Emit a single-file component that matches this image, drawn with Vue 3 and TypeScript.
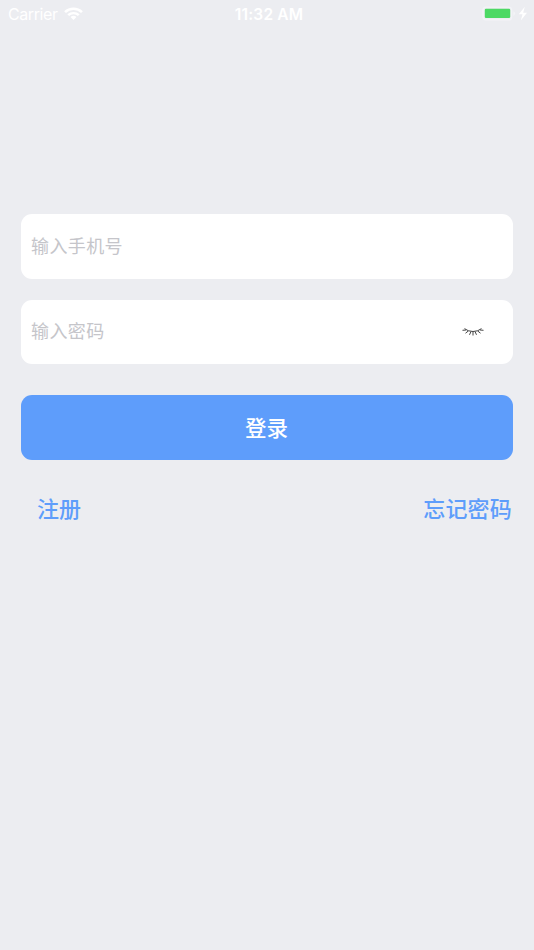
<script setup lang="ts">
import { ref } from 'vue'

const phone = ref('')
const password = ref('')
const visible = ref(false)
</script>

<template>
  <div class="screen">
    <header class="status">
      <div class="side">
        <span class="carrier">Carrier</span>
        <svg class="wifi" width="19" height="13" viewBox="0 0 18 13" preserveAspectRatio="none">
          <g fill="none" stroke="#fff" stroke-width="2.4">
            <path d="M1 5.1a11.3 11.3 0 0 1 16 0" />
            <path d="M4 8.2a7.1 7.1 0 0 1 10 0" />
          </g>
          <path d="M9 12.9 6.2 10a4 4 0 0 1 5.6 0z" fill="#fff" />
        </svg>
      </div>
      <span class="time">11:32 AM</span>
      <div class="side end">
        <svg width="46" height="16" viewBox="0 0 46 16">
          <rect x="1" y="1.1" width="28.6" height="12.8" rx="3" fill="none" stroke="#f3f4f7" stroke-width="1.3" />
          <rect x="2.8" y="2.8" width="25.4" height="9.2" rx="1.2" fill="#4cd964" />
          <path d="M31.3 5.3q1.9.8 1.9 2.3t-1.9 2.3z" fill="#f3f4f7" />
          <path d="m42.8.8-6 7.5h3.7l-1.7 6.1 6.2-7.7h-3.8z" fill="#fff" />
        </svg>
      </div>
    </header>
    <form class="form" @submit.prevent>
      <label class="field">
        <input v-model="phone" type="tel" placeholder="输入手机号" />
      </label>
      <label class="field">
        <input v-model="password" :type="visible ? 'text' : 'password'" placeholder="输入密码" />
        <button class="eye" type="button" @click="visible = !visible">
          <svg width="22" height="8" viewBox="0 0 22 8" fill="none" stroke="#444" stroke-width="1">
            <path d="M2.5.6Q6 3.5 11 3.5T19.5.6" />
            <path d="M4 2 .5 2.3M6.3 3 3.5 5.2M9 3.5 7.5 6.8M11 3.5v4M13 3.5l1.5 3.3M15.7 3l2.8 2.2M18 2l3.5.3" />
          </svg>
        </button>
      </label>
      <button class="login" type="submit">登录</button>
      <nav class="links">
        <a>注册</a>
        <a class="forgot">忘记密码</a>
      </nav>
    </form>
  </div>
</template>

<style>
body {
  background: #ecedf1;
}
</style>

<style scoped>
.screen {
  box-sizing: border-box;
  min-height: 950px;
  background: #ecedf1;
  font-family: Inter, "Noto Sans CJK SC", sans-serif;
}
.status {
  display: flex;
  align-items: center;
  height: 27px;
  padding: 0 6px 0 8px;
  color: #fff;
  font-size: 16px;
  line-height: 27px;
}
.side {
  display: flex;
  flex: 1;
  align-items: center;
  gap: 6px;
}
.end {
  justify-content: flex-end;
}
.carrier {
  padding-top: 1px;
  letter-spacing: -0.4px;
}
.time {
  padding: 1px 0 0 2px;
  font-size: 15.5px;
  font-weight: 600;
  letter-spacing: 0.2px;
}
.form {
  display: flex;
  flex-direction: column;
  padding: 187.4px 21px 0;
}
.field {
  display: flex;
  align-items: center;
  box-sizing: border-box;
  height: 64.5px;
  margin-bottom: 20.8px;
  padding: 0 29px 0 10px;
  border-radius: 11px;
  background: #fff;
}
input {
  flex: 1;
  min-width: 0;
  height: 36px;
  padding: 0 0 4px;
  border: 0;
  outline: 0;
  background: transparent;
  font: 18px "Noto Sans CJK SC", sans-serif;
  letter-spacing: 0.4px;
}
input::placeholder {
  color: #c5c5ca;
  opacity: 1;
}
.eye {
  display: flex;
  padding: 0;
  border: 0;
  background: none;
}
.login {
  height: 65px;
  margin-top: 10px;
  padding: 0 1px 2px 0;
  border: 0;
  border-radius: 11px;
  background: #5e9dfb;
  color: #fff;
  font: 500 21.5px "Noto Sans CJK SC", sans-serif;
}
.links {
  display: flex;
  justify-content: space-between;
  padding: 31px 1px 0 16px;
  color: #5e9dfb;
  font: 500 22px/32px "Noto Sans CJK SC", sans-serif;
}
.forgot {
  letter-spacing: 0.2px;
}
</style>
